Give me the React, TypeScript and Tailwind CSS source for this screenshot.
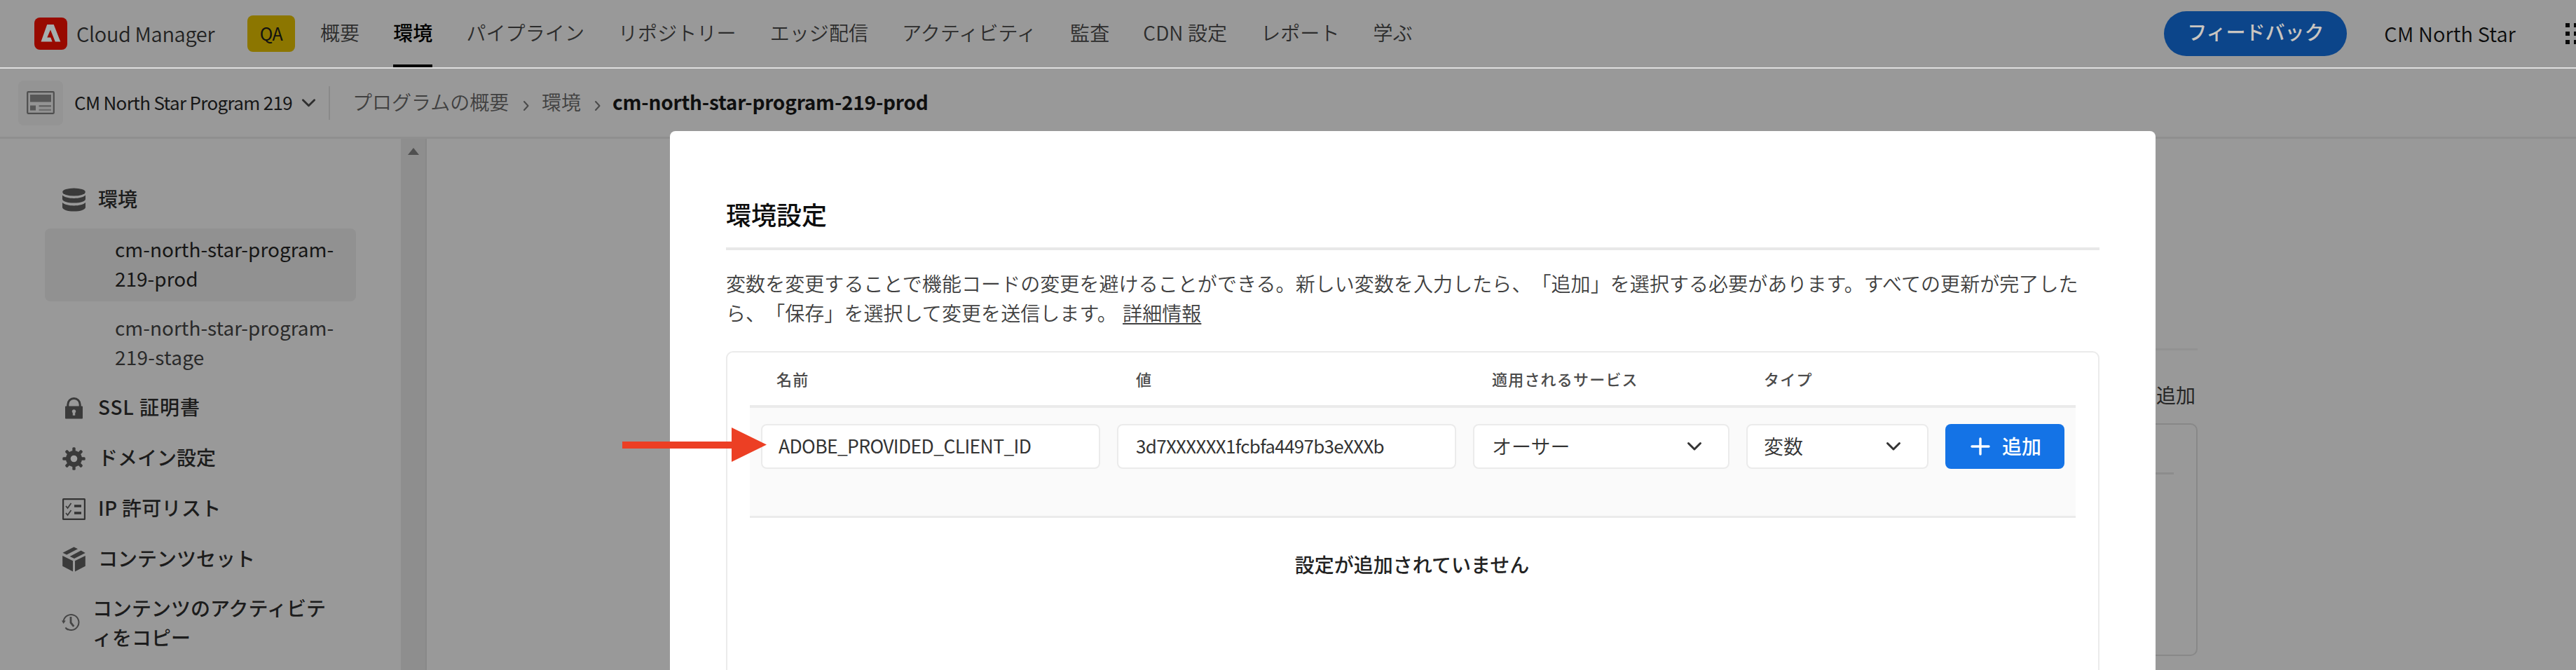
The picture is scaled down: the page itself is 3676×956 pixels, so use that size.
import type { ReactNode } from 'react';

const tabs = [
  { label: '概要' },
  { label: '環境', active: true },
  { label: 'パイプライン' },
  { label: 'リポジトリー' },
  { label: 'エッジ配信' },
  { label: 'アクティビティ' },
  { label: '監査' },
  { label: 'CDN 設定' },
  { label: 'レポート' },
  { label: '学ぶ' },
];

function AdobeLogo() {
  return (
    <svg width="47" height="46" viewBox="0 0 47 46" className="shrink-0">
      <rect width="47" height="46" rx="8" fill="#980a00" />
      <path d="M18.2 10h9.500L37.300 34.500h-7.500L23 17.500 18.300 28.500h5l2.300 6H9.500z" fill="#a6aeae" />
    </svg>
  );
}

function Chevron({ className, w = 22, h = 14 }: { className?: string; w?: number; h?: number }) {
  return (
    <svg width={w} height={h} viewBox="0 0 22 14" fill="none" className={className}>
      <path d="M2.5 2.5 11 11l8.500-8.500" stroke="currentColor" strokeWidth="3" strokeLinecap="round" strokeLinejoin="round" />
    </svg>
  );
}

function CrumbArrow() {
  return (
    <svg width="10" height="16" viewBox="0 0 10 16" fill="none" className="mt-3 shrink-0 text-[#4a4a4a]">
      <path d="M2 2l5.500 6L2 14" stroke="currentColor" strokeWidth="2" strokeLinecap="round" strokeLinejoin="round" />
    </svg>
  );
}

function ProgramIcon() {
  return (
    <svg width="40" height="33" viewBox="0 0 40 33">
      <rect x="1.200" y="1.200" width="37.600" height="30.600" rx="1" fill="none" stroke="#4f4f4f" strokeWidth="2.200" />
      <rect x="5" y="5" width="30" height="10.500" fill="#575757" />
      <rect x="5" y="20.500" width="8" height="7" fill="#575757" />
      <rect x="17.500" y="20" width="17.500" height="2.600" fill="#666" />
      <rect x="17.500" y="25.500" width="17.500" height="2.600" fill="#707070" />
    </svg>
  );
}

function DatabaseIcon() {
  return (
    <svg width="33" height="34" viewBox="0 0 33 34" fill="#3a3a3a">
      <ellipse cx="16.500" cy="6" rx="16.300" ry="5.600" />
      <path d="M0 10.500c3 3 9.500 4.400 16.500 4.400S30 13.500 33 10.500V16c0 3.200-7.400 5.600-16.500 5.600S0 19.200 0 16z" />
      <path d="M0 21c3 3 9.500 4.400 16.500 4.400S30 24 33 21v6.700c0 3.400-7.400 5.900-16.500 5.900S0 31.100 0 27.700z" />
    </svg>
  );
}

function LockIcon() {
  return (
    <svg width="25" height="31" viewBox="0 0 25 31">
      <path d="M3.800 14V10.200a8.700 8.700 0 0 1 17.400 0V14" fill="none" stroke="#3a3a3a" strokeWidth="3" />
      <path d="M1 12.500h23a1 1 0 0 1 1 1V29.500a1 1 0 0 1-1 1H1a1 1 0 0 1-1-1V13.500a1 1 0 0 1 1-1zM12.500 17.200a2.800 2.800 0 0 0-1.700 5v3.600h3.400v-3.600a2.800 2.800 0 0 0-1.700-5z" fill="#3a3a3a" fillRule="evenodd" />
    </svg>
  );
}

function GearIcon() {
  return (
    <svg width="33" height="33" viewBox="-16.500 -16.500 33 33">
      {[0, 45, 90, 135].map((a) => (
        <rect key={a} x="-2.200" y="-16.200" width="4.400" height="32.400" rx="1.500" fill="#3a3a3a" transform={`rotate(${a})`} />
      ))}
      <circle r="11.500" fill="#3a3a3a" />
      <circle r="4.800" fill="#a0a0a0" />
    </svg>
  );
}

function ChecklistIcon() {
  return (
    <svg width="33" height="31" viewBox="0 0 33 31" fill="none">
      <rect x="1.100" y="1.100" width="30.800" height="28.800" rx="0.500" stroke="#333" strokeWidth="2.200" />
      <path d="M5 11l2.500 3 5-7M5 21l2.500 3 5-7" stroke="#3a3a3a" strokeWidth="1.700" />
      <path d="M17 11h10M17 21h10" stroke="#333" strokeWidth="3.400" />
    </svg>
  );
}

function BoxIcon() {
  return (
    <svg width="33" height="36" viewBox="0 0 33 36" fill="#3a3a3a">
      <path d="M0.500 8.700 16.500 0.500l5.500 2.700L6.200 11.600z" />
      <path d="M10.700 13.900 26.600 5.500 32.700 8.900 17 17z" />
      <path d="M0.200 13 15 20.200V35.500L0.200 27.800z" />
      <path d="M32.800 13 18 20.200V35.500l14.800-7.700z" />
    </svg>
  );
}

function HistoryIcon() {
  return (
    <svg width="26" height="26" viewBox="0 0 26 26" fill="none" stroke="#464646" strokeWidth="2">
      <path d="M2.600 11a11 11 0 1 1 2.800 9.500M6 21.600a11 11 0 0 0 3 2" />
      <path d="M0 10.500h5.800L2.600 15z" fill="#464646" stroke="none" />
      <path d="M13 5v8.500l4.300 5.300" strokeWidth="2.800" />
    </svg>
  );
}

function SideItem({ icon, children, className }: { icon: ReactNode; children: ReactNode; className?: string }) {
  return (
    <div className={`flex h-[42px] items-center pl-[89px] ${className ?? ''}`}>
      <span className="mt-1 flex w-[33px] shrink-0 justify-center">{icon}</span>
      <span className="ml-[18px] font-medium whitespace-nowrap text-[#1c1c1c]">{children}</span>
    </div>
  );
}

function Header() {
  return (
    <header className="flex h-[98px] shrink-0 border-b-2 border-[#dedede]">
      <div className="flex h-[96px] items-center pl-[49px]">
        <AdobeLogo />
        <span className="ml-[13px] w-[244px] whitespace-nowrap text-[29px] font-[350] tracking-[-0.35px] text-[#222]">Cloud Manager</span>
        <span className="flex h-[52px] w-[68px] items-center justify-center rounded-lg bg-[#8c7600] text-[25px] tracking-[-0.5px] text-[#111]">QA</span>
      </div>
      <nav className="ml-9 flex h-[96px] gap-12 tracking-[0.1px]">
        {tabs.map((t) =>
          t.active ? (
            <span key={t.label} className="border-b-4 border-black font-medium leading-[93px] text-black">{t.label}</span>
          ) : (
            <span key={t.label} className="whitespace-nowrap font-[350] leading-[93px] text-[#2c2c2c]">{t.label}</span>
          ),
        )}
      </nav>
      <div className="ml-auto flex h-[96px] items-center">
        <button className="flex h-16 w-[261px] items-center justify-center rounded-full bg-[#0c458a] pb-[7px] font-medium text-[#c9c5c0]">フィードバック</button>
        <span className="ml-[53px] whitespace-nowrap text-[29px] font-[350] tracking-[0.15px] text-[#0c0c0c]">CM North Star</span>
        <div className="ml-[71px] grid w-[15px] grid-cols-[6px_6px] gap-[6px] overflow-hidden">
          {[0, 1, 2, 3, 4, 5].map((i) => (
            <i key={i} className="size-[6px] bg-[#0a0a0a]" />
          ))}
        </div>
      </div>
    </header>
  );
}

function Breadcrumbs() {
  return (
    <div className="flex h-[100px] shrink-0 items-center border-b-[3px] border-[#8f8f8f] pl-[26px]">
      <span className="flex size-16 items-center justify-center rounded-lg bg-[#949494]">
        <ProgramIcon />
      </span>
      <span className="ml-4 w-[324px] pb-[2px] whitespace-nowrap text-[26px] tracking-[-0.68px] text-[#161616]">CM North Star Program 219</span>
      <Chevron className="text-[#2f2f2f]" w={21} h={14} />
      <span className="ml-[18px] h-12 w-[2px] bg-[#8a8a8a]" />
      <div className="mb-1 ml-[32px] flex items-center whitespace-nowrap text-[#404040]">
        <span className="w-[243px] font-[350]">プログラムの概要</span>
        <CrumbArrow />
        <span className="ml-[17px] w-[75px] font-[350]">環境</span>
        <CrumbArrow />
        <span className="ml-4 font-bold tracking-[-0.22px] text-[#0f0f0f]">cm-north-star-program-219-prod</span>
      </div>
    </div>
  );
}

function Sidebar() {
  return (
    <aside className="flex w-[610px] shrink-0">
      <div className="w-[572px] pt-16 leading-[42px]">
        <SideItem icon={<DatabaseIcon />}>環境</SideItem>
        <div className="mt-[22px] ml-16 h-[104px] w-[444px] rounded-lg bg-[#919191] pt-2 pl-[100px] text-[#161616]">
          cm-north-star-program-<br />219-prod
        </div>
        <div className="mt-4 ml-16 h-[84px] pl-[100px] text-[#2a2a2a]">
          cm-north-star-program-<br /><span className="tracking-[0.25px]">219-stage</span>
        </div>
        <SideItem className="mt-[29px]" icon={<LockIcon />}><span className="tracking-[0.9px]">SSL 証明書</span></SideItem>
        <SideItem className="mt-[30px]" icon={<GearIcon />}>ドメイン設定</SideItem>
        <SideItem className="mt-[30px]" icon={<ChecklistIcon />}><span className="tracking-[0.3px]">IP 許可リスト</span></SideItem>
        <SideItem className="mt-[30px]" icon={<BoxIcon />}>コンテンツセット</SideItem>
        <div className="mt-[29px] flex items-center pl-[88px]">
          <HistoryIcon />
          <span className="ml-[18px] font-medium text-[#1c1c1c]">コンテンツのアクティビテ<br />ィをコピー</span>
        </div>
      </div>
      <div className="flex w-[37px] justify-center border-r-2 border-[#888] bg-[#8e8e8e] pt-[13px]">
        <svg width="16" height="10" viewBox="0 0 16 10"><path d="M8 0l8 10H0z" fill="#505050" /></svg>
      </div>
    </aside>
  );
}

function EnvironmentPage() {
  return (
    <main className="flex-1 pt-[299px] pr-[540px] pl-[540px]">
      <div className="h-[3px] bg-[#929292]" />
      <div className="pt-[42px] pr-[3px] text-right leading-[42px] text-[#262626]">追加</div>
      <div className="mt-5 h-[332px] rounded-[10px] border-2 border-[#888] px-8 pt-[68px]">
        <div className="h-[3px] bg-[#8c8c8c]" />
      </div>
    </main>
  );
}

function Field({ children, className }: { children: ReactNode; className: string }) {
  return (
    <div className={`flex h-16 items-center rounded-lg border-2 border-[#ebebeb] bg-white pb-[3px] whitespace-nowrap text-[#333] ${className}`}>
      {children}
    </div>
  );
}

function EnvironmentDialog() {
  return (
    <section className="absolute top-[187px] left-[956px] flex h-[900px] w-[2120px] flex-col rounded-t-lg bg-white px-20 text-[#4b4b4b]">
      <h1 className="mt-[94px] h-[72px] text-[36px] leading-[48px] font-medium text-[#0d0d0d]">環境設定</h1>
      <div className="h-1 shrink-0 bg-[#e8e8e8]" />
      <p className="mt-[26px] h-[84px] leading-[42px] font-[350] tracking-[0.07px] whitespace-nowrap text-[#404040] [text-spacing-trim:space-all]">
        変数を変更することで機能コードの変更を避けることができる。新しい変数を入力したら、「追加」を選択する必要があります。すべての更新が完了した<br />
        ら、「保存」を選択して変更を送信します。 <a className="ml-[2px] underline decoration-2 underline-offset-[3px]">詳細情報</a>
      </p>
      <div className="mt-[34px] flex-1 rounded-t-[10px] border-2 border-[#ebebeb] px-8">
        <div className="flex h-[75px] pl-[38px] text-[22px] leading-[74px] font-medium tracking-[1.200px] whitespace-nowrap">
          <span className="w-[513px]">名前</span>
          <span className="w-[508px]">値</span>
          <span className="w-[388px]">適用されるサービス</span>
          <span>タイプ</span>
        </div>
        <div className="flex h-[161px] items-start border-t-[4px] border-b-[3px] border-[#ebebeb] bg-[#fafafa] pt-[23px] pl-4">
          <Field className="w-[484px] pl-[23px] text-[26.500px] tracking-[-0.62px]"><span>ADOBE_PROVIDED_CLIENT_ID</span></Field>
          <Field className="ml-[24px] w-[484px] pl-[25px] text-[26px] tracking-[-0.7px]"><span>3d7XXXXXX1fcbfa4497b3eXXXb</span></Field>
          <Field className="ml-[24px] w-[366px] justify-between pr-[37px] pl-[25px]"><span className="font-[350]">オーサー</span><Chevron className="mt-[2px]" /></Field>
          <Field className="ml-[24px] w-[260px] justify-between pr-[37px] pl-[23px]"><span className="font-[350]">変数</span><Chevron className="mt-[2px]" /></Field>
          <button className="ml-[24px] flex h-16 w-[170px] items-center rounded-lg bg-[#1473e6] pb-[3px] pl-9 font-medium text-white">
            <svg width="28" height="26" viewBox="0 0 28 26" className="mt-[2px] mr-[17px]"><path d="M14 2v22M2 13h24" stroke="currentColor" strokeWidth="3.400" strokeLinecap="round" /></svg>
            <span>追加</span>
          </button>
        </div>
        <div className="mt-[45px] pr-[2px] text-center leading-[42px] font-medium text-[#222]">設定が追加されていません</div>
      </div>
    </section>
  );
}

export default function App() {
  return (
    <div className="relative flex h-[956px] w-[3676px] flex-col overflow-hidden bg-[#999] font-['Noto_Sans_CJK_JP',sans-serif] text-[28px]">
      <Header />
      <Breadcrumbs />
      <div className="flex min-h-0 flex-1">
        <Sidebar />
        <EnvironmentPage />
      </div>
      <EnvironmentDialog />
      <svg width="206" height="50" viewBox="0 0 206 50" className="absolute top-[610px] left-[888px]" fill="#ec3f24">
        <path d="M0 20h156V0l50 24.500L156 49V30H0z" />
      </svg>
    </div>
  );
}
